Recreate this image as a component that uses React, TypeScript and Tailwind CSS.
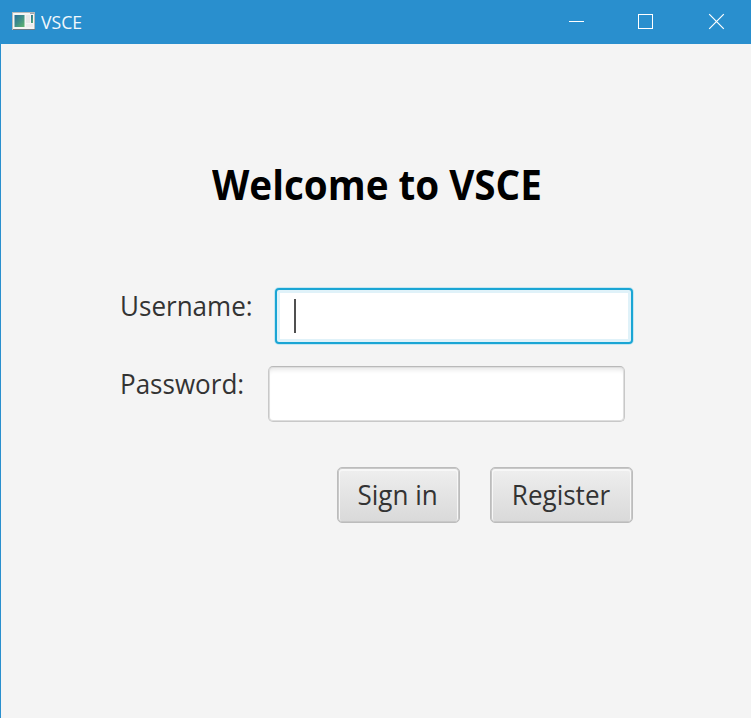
import React from "react";

function TitleBar() {
  return (
    <header className="flex h-11 items-center bg-[#298fce] pl-3 text-white">
      <svg width="24" height="20" viewBox="0 0 24 20" className="shrink-0">
        <defs>
          <linearGradient id="pane" x1="0" y1="0" x2="1" y2="1">
            <stop offset="0" stopColor="#286f9b" />
            <stop offset="0.5" stopColor="#408f88" />
            <stop offset="1" stopColor="#62b66b" />
          </linearGradient>
        </defs>
        <rect x="0.5" y="0.5" width="22" height="17" fill="#f5f5f4" stroke="#b9bab9" />
        <rect x="1" y="17" width="22" height="1" fill="#6e7b84" />
        <rect x="18" y="1" width="4" height="1" fill="#a5a8b0" />
        <rect x="2.500" y="3" width="10" height="12" fill="url(#pane)" />
        <rect x="14" y="3" width="4" height="8" fill="#e8e8e8" />
        <rect x="14" y="12" width="7" height="3" fill="#ececec" />
        <rect x="19" y="3" width="2" height="8" fill="url(#pane)" />
      </svg>
      <span className="ml-[5px] origin-left scale-x-[0.98] text-[18px] leading-6 text-[#f2f8fc]">VSCE</span>
      <div className="ml-auto flex h-full items-center">
        <svg width="182" height="44" viewBox="0 0 182 44" fill="none" stroke="white">
          <path d="M0 21.5H15" />
          <rect x="69.500" y="14.500" width="14" height="14" />
          <path d="M140.200 14.200L154.800 28.800M154.800 14.200L140.200 28.800" strokeWidth="1.200" />
        </svg>
      </div>
    </header>
  );
}

export default function App() {
  return (
    <div className="h-[718px] w-[751px] overflow-hidden bg-[#f4f4f4] font-['Open_Sans','Noto_Sans',sans-serif] text-[#333]">
      <TitleBar />
      <main className="h-[674px] border-l border-[#298fce] pt-[110px] pl-[119px]">
        <h1 className="ml-[92px] h-[60px] w-max origin-left scale-x-[0.942] text-[41px] leading-[60px] font-bold whitespace-nowrap text-black">Welcome to VSCE</h1>
        <form className="mt-[74px] w-[513px]" onSubmit={(e) => e.preventDefault()}>
          <div className="flex h-14">
            <label className="h-9 w-[155px] origin-left scale-x-[0.964] text-[27px] leading-[35px]">Username:</label>
            <div className="flex h-14 w-[358px] shrink-0 items-center rounded-[4px] border-2 border-[#1aa5d4] bg-white pl-[17px] shadow-[inset_0_0_0_3px_#e0f2f9,0_0_0_1px_#c6e7f2]">
              <span className="h-[34px] w-[2px] bg-[#505050]" />
            </div>
          </div>
          <div className="mt-[22px] flex h-14">
            <label className="h-9 w-[148px] origin-left scale-x-[0.964] text-[27px] leading-[35px]">Password:</label>
            <div className="h-14 w-[357px] rounded-[5px] border border-[#c8c8c8] border-t-[#b9b9b9] bg-white shadow-[inset_0_0_0_1px_#dedede,inset_0_5px_4px_-2px_#e8e8e8]" />
          </div>
          <div className="mt-[45px] flex justify-end gap-[30px]">
            <button className="flex h-14 w-[123px] items-center justify-center rounded-[5px] border border-[#bcbcbc] bg-linear-to-b from-[#efefef] to-[#d9d9d9] text-[27px] shadow-[inset_0_0_0_1px_#c8c8c8,inset_0_1px_0_2px_#f7f7f7]"><span className="mr-px scale-x-[0.964] whitespace-nowrap">Sign in</span></button>
            <button className="flex h-14 w-[143px] items-center justify-center rounded-[5px] border border-[#bcbcbc] bg-linear-to-b from-[#efefef] to-[#d9d9d9] text-[27px] shadow-[inset_0_0_0_1px_#c8c8c8,inset_0_1px_0_2px_#f7f7f7]"><span className="mr-[2px] scale-x-[0.964] whitespace-nowrap">Register</span></button>
          </div>
        </form>
      </main>
    </div>
  );
}
